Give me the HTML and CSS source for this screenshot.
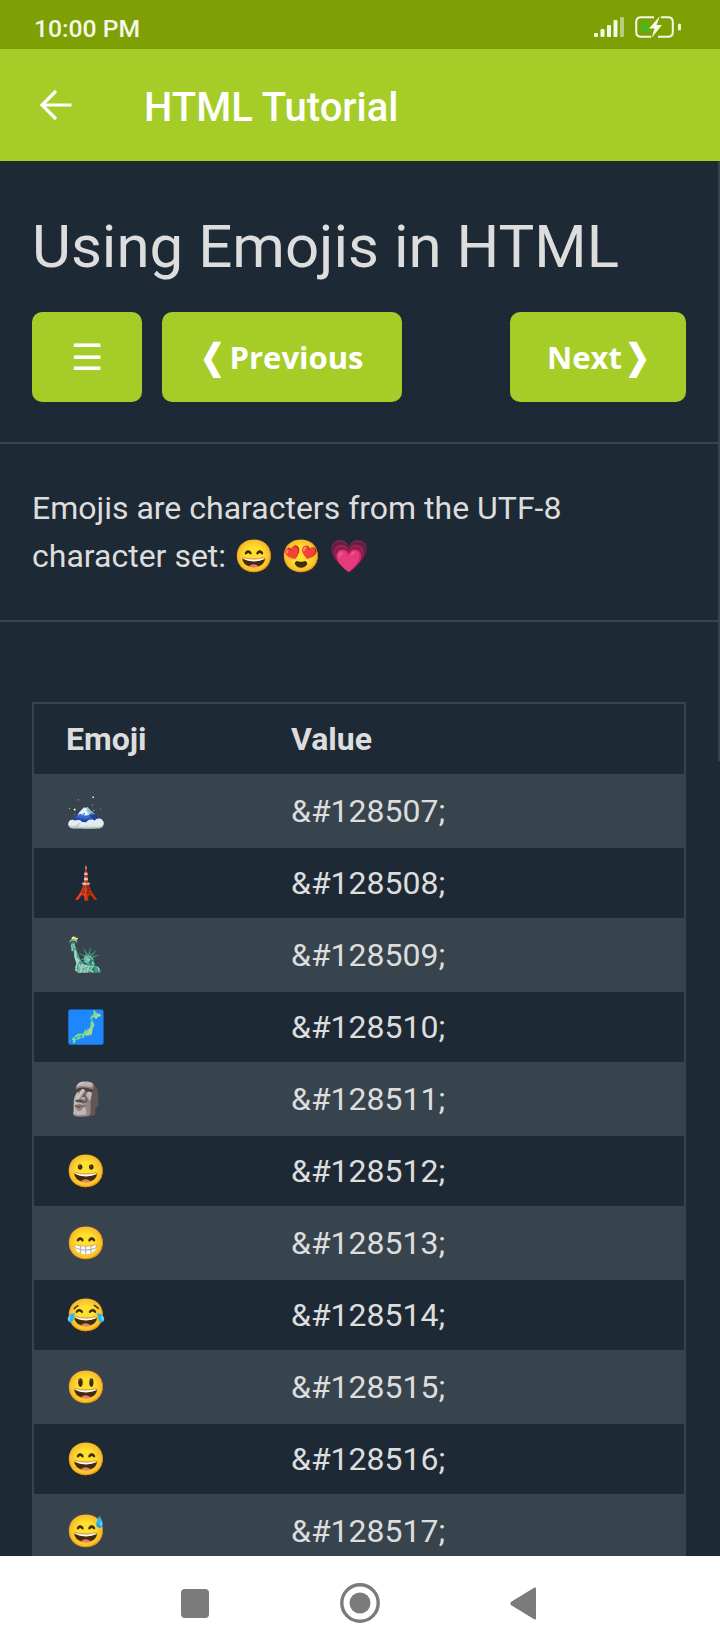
FILE: index.html
```html
<!DOCTYPE html>
<html lang="en">
<head>
<meta charset="utf-8">
<title>HTML Tutorial</title>
<link rel="stylesheet" href="styles.css">
</head>
<body>
<div class="phone">
  <header class="status-bar">
    <span class="clock">10:00 PM</span>
    <div class="status-icons">
      <svg class="signal" viewBox="0 0 30 20" aria-hidden="true">
        <rect x="0" y="16" width="4" height="4" rx="1" fill="#f3f7e4"/>
        <rect x="6.500" y="12" width="4" height="8" rx="1" fill="#f3f7e4"/>
        <rect x="13" y="8" width="4" height="12" rx="1" fill="#f3f7e4"/>
        <rect x="19.500" y="3" width="4" height="17" rx="1" fill="#f3f7e4"/>
        <rect x="26" y="0" width="4" height="20" rx="1" fill="#b7cc7e"/>
      </svg>
      <svg class="battery" viewBox="0 0 46 22" aria-hidden="true">
        <path d="M19 1.200H6Q1.200 1.200 1.200 6V16Q1.200 20.800 6 20.800H16M26 1.200H33Q37.800 1.200 37.800 6V16Q37.800 20.800 33 20.800H23" fill="none" stroke="#f3f7e4" stroke-width="2"/>
        <rect x="6" y="5.500" width="8" height="11" rx="1" fill="#4cb61a"/>
        <path d="M25 0 14 12.500H19.500L16.500 22 27 9H21.500Z" fill="#f6f9e8"/>
        <rect x="43" y="7.500" width="3" height="7" rx="1.500" fill="#f3f7e4"/>
      </svg>
    </div>
  </header>

  <nav class="app-bar">
    <svg class="back-arrow" viewBox="0 0 34 32" aria-hidden="true">
      <path d="M32.500 16H3M17 2 3 16 17 30" fill="none" stroke="#fff" stroke-width="3.200"/>
    </svg>
    <span class="app-title">HTML Tutorial</span>
  </nav>

  <main class="page">
    <div class="scroll-thumb"></div>
    <h1 class="heading">Using Emojis in HTML</h1>
    <div class="pager">
      <a class="btn btn-menu">&#9776;</a>
      <a class="btn btn-prev"><span class="chev">&#10094;</span> Previous</a>
      <a class="btn btn-next">Next <span class="chev">&#10095;</span></a>
    </div>
    <hr class="rule">
    <p class="intro">Emojis are characters from the UTF-8 character set: &#128516; &#128525; &#128151;</p>
    <hr class="rule">
    <table class="emoji-table">
      <thead>
        <tr><th class="col-emoji">Emoji</th><th>Value</th></tr>
      </thead>
      <tbody>
        <tr><td>&#128507;</td><td>&amp;#128507;</td></tr>
        <tr><td>&#128508;</td><td>&amp;#128508;</td></tr>
        <tr><td>&#128509;</td><td>&amp;#128509;</td></tr>
        <tr><td>&#128510;</td><td>&amp;#128510;</td></tr>
        <tr><td>&#128511;</td><td>&amp;#128511;</td></tr>
        <tr><td>&#128512;</td><td>&amp;#128512;</td></tr>
        <tr><td>&#128513;</td><td>&amp;#128513;</td></tr>
        <tr><td>&#128514;</td><td>&amp;#128514;</td></tr>
        <tr><td>&#128515;</td><td>&amp;#128515;</td></tr>
        <tr><td>&#128516;</td><td>&amp;#128516;</td></tr>
        <tr><td>&#128517;</td><td>&amp;#128517;</td></tr>
      </tbody>
    </table>
  </main>

  <footer class="nav-bar">
    <svg class="nav-icon nav-square" viewBox="0 0 28 29" aria-hidden="true"><rect x="0" y="0" width="28" height="29" rx="4" fill="#7b7b7b"/></svg>
    <svg class="nav-icon nav-home" viewBox="0 0 40 40" aria-hidden="true"><circle cx="20" cy="20" r="18.200" fill="none" stroke="#7b7b7b" stroke-width="3.400"/><circle cx="20" cy="20" r="10.500" fill="#7b7b7b"/></svg>
    <svg class="nav-icon nav-back" viewBox="0 0 26 33" aria-hidden="true"><path d="M24.500 .6Q26 0 26 1.500V31.500Q26 33 24.500 32.400L.8 18Q0 16.500 .8 15Z" fill="#7b7b7b"/></svg>
  </footer>
</div>
</body>
</html>
```
FILE: styles.css
```css
* { box-sizing: border-box; }

html, body {
  margin: 0;
  padding: 0;
  background: #1d2a35;
}

body {
  font-family: Roboto, "Noto Color Emoji", sans-serif;
}

.phone {
  display: flex;
  flex-direction: column;
  width: 720px;
  height: 1650px;
  overflow: hidden;
}

/* status bar */
.status-bar {
  flex: 0 0 49px;
  display: flex;
  align-items: center;
  justify-content: space-between;
  padding: 7px 39px 0 34px;
  background: #7ea004;
  color: #f5f8e6;
}

.clock {
  font-size: 24.700px;
  font-weight: 500;
}

.status-icons {
  display: flex;
  align-items: center;
  gap: 11px;
  margin-top: -2px;
}

.signal { width: 30px; height: 20px; }
.battery { width: 46px; height: 22px; }

/* app bar */
.app-bar {
  flex: 0 0 112px;
  display: flex;
  align-items: center;
  padding-left: 39px;
  background: #a6cd27;
  color: #fff;
}

.back-arrow {
  width: 34px;
  height: 32px;
  flex: none;
}

.app-title {
  margin-left: 71px;
  padding-top: 4px;
  font-size: 40px;
  font-weight: 500;
}

/* page */
.page {
  flex: 1 1 auto;
  min-height: 0;
  position: relative;
  overflow: hidden;
  background: #1d2a35;
  color: #ddd;
}

.scroll-thumb {
  position: absolute;
  top: 0;
  right: 0;
  width: 2px;
  height: 600px;
  background: #38444d;
}

.heading {
  margin: 0;
  padding: 44px 32px 0;
  font-size: 60px;
  font-weight: 400;
  line-height: 84px;
}

.pager {
  display: flex;
  gap: 20px;
  padding: 23px 34px 0 32px;
}

.btn {
  display: block;
  height: 90px;
  border-radius: 10px;
  background: #a6cd27;
  color: #fff;
  font-family: "Open Sans", sans-serif;
  font-size: 31px;
  font-weight: 700;
  line-height: 90px;
  text-align: center;
  word-spacing: -2px;
}

.chev {
  display: inline-flex;
  justify-content: center;
  width: 23px;
  font-size: 35px;
  font-weight: 700;
  line-height: 1;
  transform: scaleX(.85);
}

.btn-menu { width: 110px; font-size: 36px; font-weight: 400; }
.btn-prev { width: 240px; }
.btn-next { width: 176px; margin-left: auto; word-spacing: -4px; }

.rule {
  height: 2px;
  margin: 40px 0 0;
  border: 0;
  background: #38444d;
}

.intro {
  margin: 0;
  padding: 40px 32px 40px;
  font-size: 32px;
  line-height: 48px;
}

.intro + .rule { margin-top: 0; }

.emoji-table {
  width: 654px;
  margin: 80px 0 0 32px;
  border: 2px solid #38444d;
  border-collapse: separate;
  border-spacing: 0;
  table-layout: fixed;
  font-size: 32px;
  line-height: 48px;
}

.emoji-table th,
.emoji-table td {
  height: 72px;
  padding: 0 0 0 32px;
  border-bottom: 2px solid #38444d;
  text-align: left;
}

.emoji-table th {
  font-weight: 700;
}

.col-emoji { width: 225px; }

.emoji-table tbody tr:nth-child(odd) { background: #38444d; }

/* navigation bar */
.nav-bar {
  flex: 0 0 94px;
  display: flex;
  align-items: center;
  background: #fff;
}

.nav-icon { flex: none; }
.nav-square { width: 28px; height: 29px; margin-left: 181px; }
.nav-home { width: 40px; height: 40px; margin-left: 131px; }
.nav-back { width: 26px; height: 33px; margin-left: 130px; }
```
